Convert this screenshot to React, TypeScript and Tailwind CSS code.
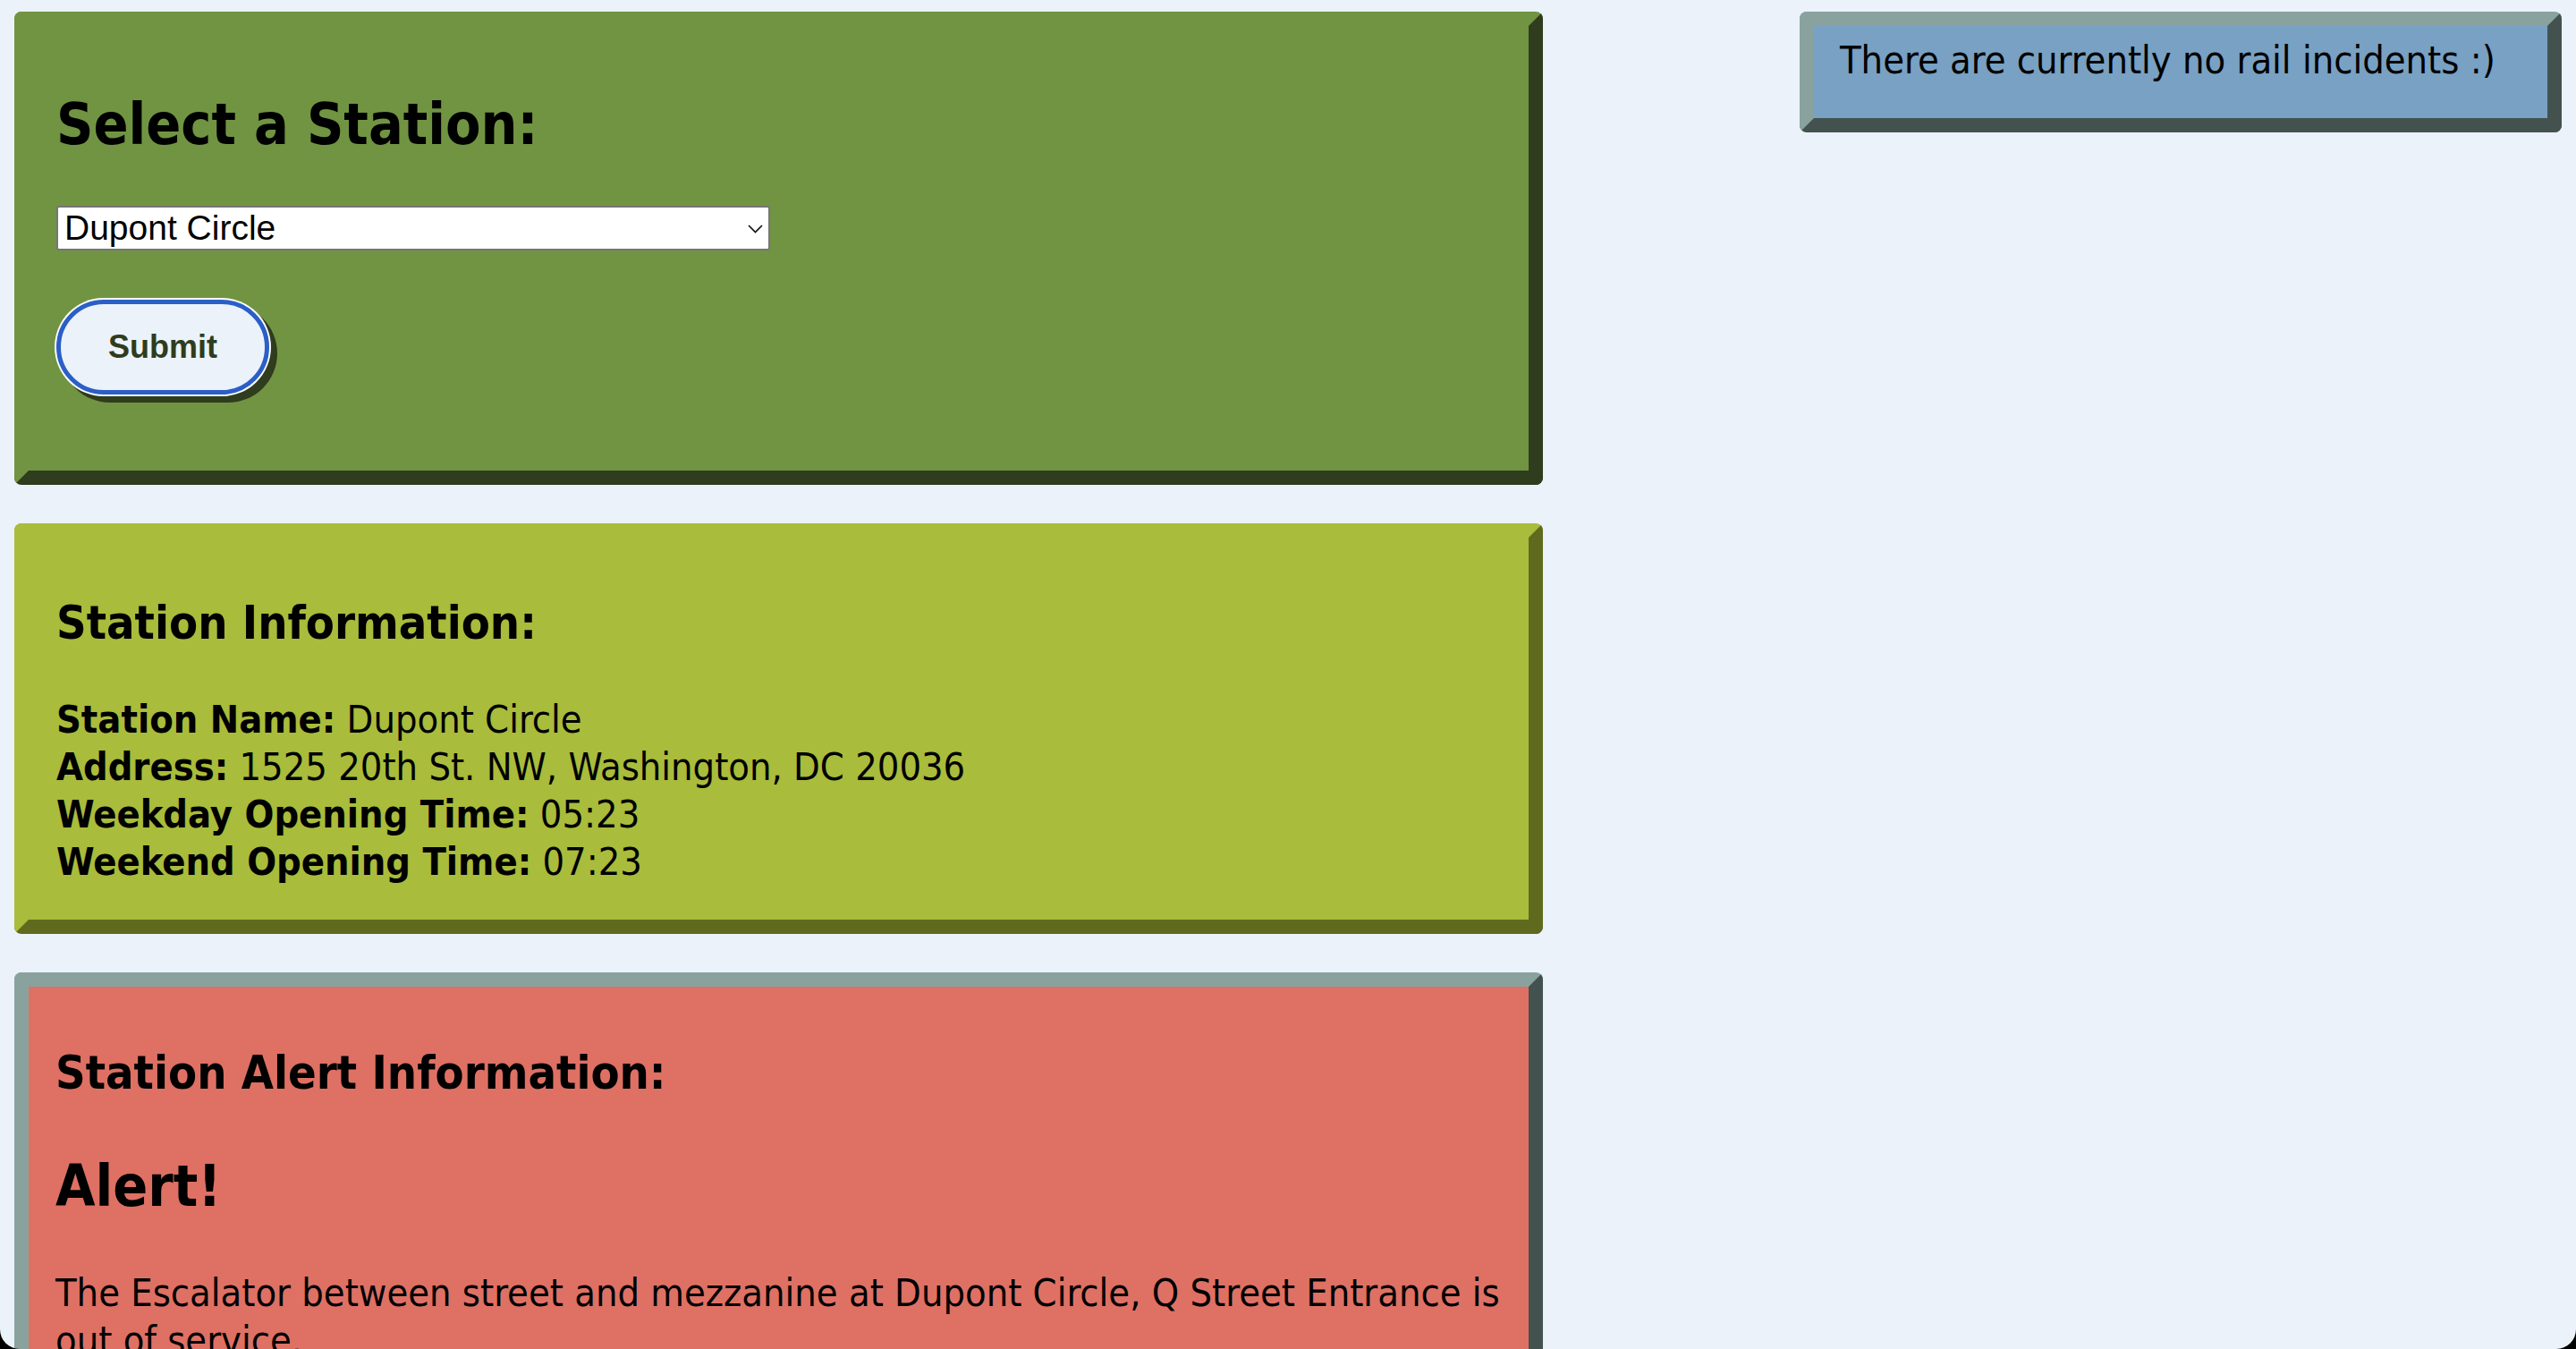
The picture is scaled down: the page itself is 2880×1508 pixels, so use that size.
import { useState } from 'react'

const stations = ['Dupont Circle', 'Farragut North', 'Metro Center', 'Gallery Place', 'Union Station']

const stationInfo = [
  { label: 'Station Name:', value: 'Dupont Circle' },
  { label: 'Address:', value: '1525 20th St. NW, Washington, DC 20036' },
  { label: 'Weekday Opening Time:', value: '05:23' },
  { label: 'Weekend Opening Time:', value: '07:23' },
]

const tahoma = "font-['DejaVu_Sans_Condensed','DejaVu_Sans',sans-serif] font-stretch-condensed"

export default function App() {
  const [station, setStation] = useState('Dupont Circle')

  return (
    <div className={`min-h-screen bg-[#ebf2fa] text-black ${tahoma}`}>
      <div className="flex justify-between px-[16px] pt-[13px]">
        {/* Left column */}
        <div className="flex w-[1709px] flex-col gap-[43px]">
          {/* Select a station */}
          <div className="rounded-[8px] border-[16px] border-t-[#719442] border-l-[#719442] border-r-[#2f3c1d] border-b-[#2f3c1d] bg-[#719442] pr-[32px] pb-[85px] pl-[31px]">
            <h1 className="mt-[72px] text-[64px] leading-[76px] font-bold">Select a Station:</h1>
            <div className="relative mt-[53px] w-[798px]">
              <select
                value={station}
                onChange={(e) => setStation(e.target.value)}
                className="block h-[50px] w-full appearance-none rounded-[3px] border-2 border-[#767676] bg-white pl-[7px] font-['Liberation_Sans',Arial,sans-serif] text-[39px] leading-[46px] text-black"
              >
                {stations.map((s) => (
                  <option key={s} value={s}>
                    {s}
                  </option>
                ))}
              </select>
              <svg
                className="pointer-events-none absolute top-[21px] right-[8px]"
                width="17"
                height="10"
                viewBox="0 0 17 10"
                fill="none"
              >
                <polyline points="1,1 8.5,8.5 16,1" stroke="#111" strokeWidth="1.6" />
              </svg>
            </div>
            <button className="mt-[55px] flex h-[106px] w-[238px] items-center justify-center rounded-full border-[5px] border-[#2b5fc7] bg-[#ebf2fa] font-['Liberation_Sans',Arial,sans-serif] text-[36px] font-bold text-[#2f3c1d] shadow-[0_0_0_2px_#ffffff,7px_7px_0_2px_#2f3c1d]">
              Submit
            </button>
          </div>

          {/* Station information */}
          <div className="rounded-[8px] border-[16px] border-t-[#a9bc3b] border-l-[#a9bc3b] border-r-[#5f6a1f] border-b-[#5f6a1f] bg-[#a9bc3b] pr-[32px] pb-[38px] pl-[31px]">
            <h2 className="mt-[64px] text-[52px] leading-[62px] font-bold">Station Information:</h2>
            <div className="mt-[51px] text-[43px] leading-[53px]">
              {stationInfo.map((row) => (
                <div key={row.label}>
                  <span className="font-bold">{row.label}</span> {row.value}
                </div>
              ))}
            </div>
          </div>

          {/* Station alerts */}
          <div className="rounded-[8px] border-[16px] border-t-[#8aa29e] border-l-[#8aa29e] border-r-[#43524f] border-b-[#43524f] bg-[#de7164] pr-[12px] pb-[48px] pl-[30px]">
            <h2 className="mt-[65px] text-[52px] leading-[62px] font-bold">Station Alert Information:</h2>
            <h1 className="mt-[58px] text-[64px] leading-[76px] font-bold">Alert!</h1>
            <p className="mt-[55px] text-[43px] leading-[53px]">
              The Escalator between street and mezzanine at Dupont Circle, Q Street Entrance is out of service.
            </p>
          </div>
        </div>

        {/* Rail incidents */}
        <div className="h-fit w-[852px] rounded-[8px] border-[16px] border-t-[#8aa29e] border-l-[#8aa29e] border-r-[#43524f] border-b-[#43524f] bg-[#78a1c3] pt-[12px] pb-[38px] pl-[29px]">
          <p className="text-[43px] leading-[53px]">There are currently no rail incidents :)</p>
        </div>
      </div>

      {/* window corners */}
      <div className="pointer-events-none fixed inset-0 rounded-b-[22px] shadow-[0_0_0_60px_#000]" />
    </div>
  )
}
